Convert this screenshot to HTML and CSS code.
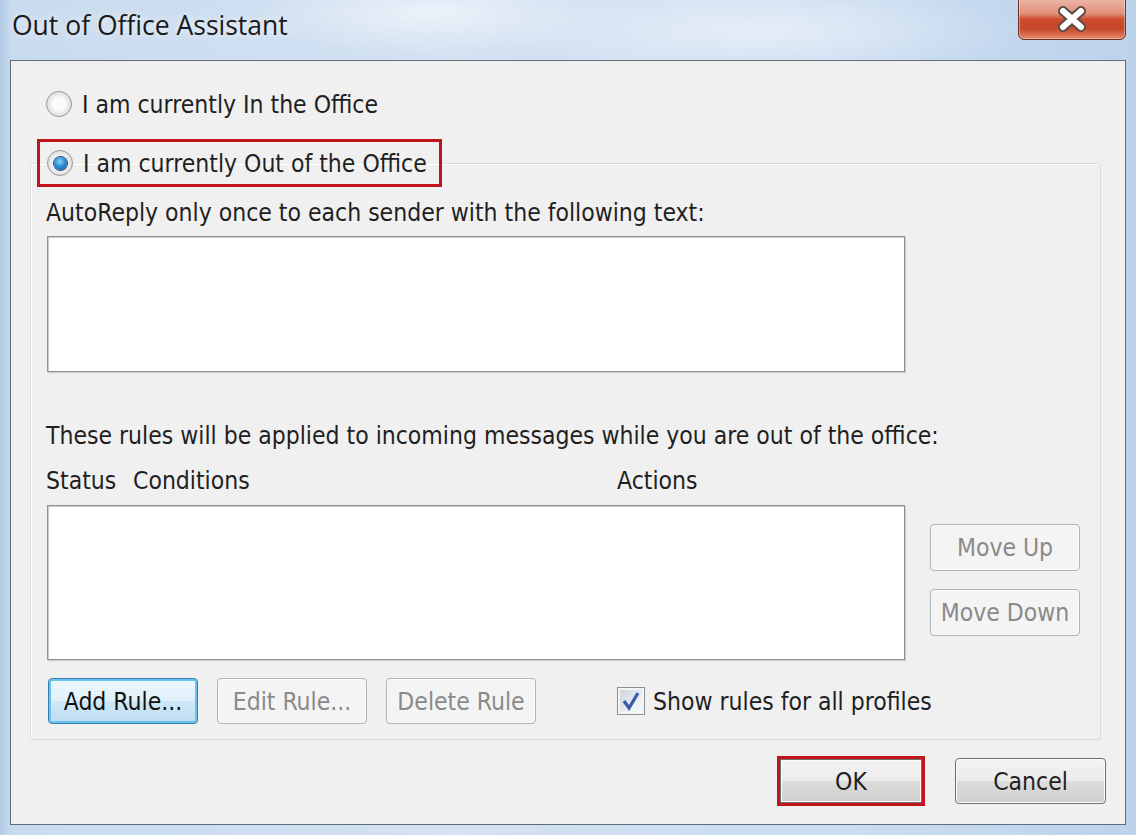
FILE: index.html
```html
<!DOCTYPE html>
<html lang="en">

<head>
    <meta charset="utf-8">
    <title>Out of Office Assistant</title>
    <link rel="stylesheet" href="styles.css">
</head>

<body>

    <div class="window">
        <header class="titlebar">
            <span class="title">Out of Office Assistant</span>
            <button class="close" aria-label="Close">
                <svg width="34" height="26" viewBox="0 0 34 26">
                    <path d="M8 5 L26 21 M26 5 L8 21" stroke="#5a4a48" stroke-width="10" stroke-linecap="round" />
                    <path d="M8 5 L26 21 M26 5 L8 21" stroke="#ffffff" stroke-width="6" stroke-linecap="round" />
                </svg>
            </button>
        </header>

        <div class="client">
            <label class="option first">
                <span class="radio"></span>
                I am currently In the Office
            </label>

            <fieldset class="group">
                <legend class="option marked">
                    <span class="radio on"></span>
                    I am currently Out of the Office
                </legend>

                <p class="label reply-label">AutoReply only once to each sender with the following text:</p>
                <div class="box reply"></div>

                <p class="label rules-label">These rules will be applied to incoming messages while you are out of the office:</p>
                <div class="cols">
                    <span class="col-status">Status</span>
                    <span class="col-cond">Conditions</span>
                    <span>Actions</span>
                </div>

                <div class="rules-row">
                    <div class="box rules"></div>
                    <div class="side">
                        <button class="btn" disabled>Move Up</button>
                        <button class="btn" disabled>Move Down</button>
                    </div>
                </div>

                <div class="actions">
                    <button class="btn focus">Add Rule...</button>
                    <button class="btn" disabled>Edit Rule...</button>
                    <button class="btn" disabled>Delete Rule</button>
                    <label class="check">
                        <span class="checkbox">
                            <svg width="22" height="22" viewBox="0 0 22 22">
                                <path d="M4 11 L9 18 L18 3" fill="none" stroke="#3b5aa6" stroke-width="3.2" />
                            </svg>
                        </span>
                        Show rules for all profiles
                    </label>
                </div>
            </fieldset>

            <div class="footer">
                <div class="marked ok-mark">
                    <button class="btn ok">OK</button>
                </div>
                <button class="btn cancel">Cancel</button>
            </div>
        </div>
    </div>

</body>

</html>
```

FILE: styles.css
```css
body {
    margin: 0;
    font-family: "DejaVu Sans", sans-serif;
    font-stretch: condensed;
    font-size: 24.5px;
    color: #1f1f1f;
}

.window {
    width: 1136px;
    height: 835px;
    display: flex;
    flex-direction: column;
    background:
        radial-gradient(ellipse 180px 40px at 430px 14px, rgba(255, 255, 255, 0.55), transparent),
        radial-gradient(ellipse 260px 50px at 760px 30px, rgba(255, 255, 255, 0.5), transparent),
        linear-gradient(90deg, #b3cbe6 0px, #c9dbef 12px, #d4e2f2 40%, #cadcf0 75%, #bdd3ec 100%);
    overflow: hidden;
}

.titlebar {
    height: 60px;
    position: relative;
    flex-shrink: 0;
}

.title {
    display: block;
    padding: 7px 0 0 12px;
    font-family: "Open Sans", sans-serif;
    font-stretch: normal;
    font-size: 26.5px;
    color: #1a1a1a;
    text-shadow: 0 0 8px rgba(255, 255, 255, 0.9);
}

.close {
    position: absolute;
    top: -3px;
    right: 10px;
    width: 108px;
    height: 43px;
    border: 1px solid #6e3326;
    border-radius: 0 0 6px 6px;
    background: linear-gradient(180deg, #ecb6a8 0%, #e39179 38%, #cc4b2d 52%, #c8462a 75%, #e48d6b 100%);
    box-shadow: inset 0 0 0 1px rgba(255, 255, 255, 0.35);
    display: flex;
    align-items: center;
    justify-content: center;
    padding: 0;
}

.client {
    flex: 1;
    margin: 0 10px 10px 10px;
    border: 1px solid #5f6c7a;
    background-color: #f0f0f0;
    padding: 28px 0 0 0;
    display: flex;
    flex-direction: column;
}

.option {
    display: flex;
    align-items: center;
    gap: 10px;
    height: 30px;
}

.first {
    padding-left: 35px;
}

.radio {
    width: 26px;
    height: 26px;
    border-radius: 50%;
    border: 1px solid #979797;
    box-sizing: border-box;
    background: radial-gradient(circle, #fbfbfb 0 35%, #e2e2e2 65%, #f6f6f6 100%);
    display: flex;
    align-items: center;
    justify-content: center;
    flex-shrink: 0;
}

.radio.on::after {
    content: "";
    width: 13px;
    height: 13px;
    border-radius: 50%;
    background: radial-gradient(circle at 45% 35%, #8fd3f7 0, #2a8fd6 45%, #0f4f95 100%);
    box-shadow: 0 0 0 1px #1d4f86;
}

.group {
    margin: 20px 24px 0 19px;
    padding: 0 0 15px 0;
    border: 1px solid #d6dbe0;
    border-radius: 3px;
    box-shadow: inset 1px 1px 0 #ffffff;
}

.marked {
    border: 3px solid #c2141b;
}

.group legend {
    margin-left: 6px;
    padding: 0 12px 0 7px;
    height: 42px;
}

.label {
    margin: 0;
    padding-left: 15px;
    line-height: 28px;
}

.reply-label {
    margin-top: 12px;
}

.box {
    background-color: #ffffff;
    border: 1px solid #8f9092;
    box-shadow: inset 1px 1px 1px #c9c9c9, 1px 1px 1px #d0d0d0;
    box-sizing: border-box;
    width: 858px;
}

.reply {
    height: 136px;
    margin: 9px 0 0 16px;
}

.rules-label {
    margin-top: 50px;
}

.cols {
    display: flex;
    padding-left: 15px;
    margin-top: 17px;
    line-height: 28px;
}

.col-status {
    width: 87px;
}

.col-cond {
    width: 484px;
}

.rules-row {
    display: flex;
    gap: 25px;
    margin: 10px 0 0 16px;
}

.rules {
    height: 155px;
}

.side {
    display: flex;
    flex-direction: column;
    gap: 18px;
    padding-top: 19px;
}

.btn {
    width: 150px;
    height: 47px;
    font-family: "DejaVu Sans", sans-serif;
    font-stretch: condensed;
    font-size: 24.5px;
    color: #1f1f1f;
    border: 1px solid #707070;
    border-radius: 4px;
    background: linear-gradient(180deg, #f3f3f3 0%, #ebebeb 49%, #dddddd 51%, #cfcfcf 100%);
    box-shadow: inset 0 0 0 1px #fbfbfb;
    padding: 0;
    white-space: nowrap;
}

.btn:disabled {
    color: #8a8a8a;
    border-color: #b0b3b5;
    background: #f4f4f4;
    box-shadow: inset 0 0 0 1px #fbfbfb;
}

.actions {
    display: flex;
    align-items: center;
    margin: 18px 0 0 17px;
}

.actions .btn {
    height: 46px;
}

.actions .btn + .btn {
    margin-left: 19px;
}

.btn.focus {
    border-color: #3a7bb0;
    background: linear-gradient(180deg, #edf7fd 0%, #e1f1fb 49%, #cfe8f8 51%, #bcdcef 100%);
    box-shadow: inset 0 0 0 2px #68c3ef;
    color: #111;
}

.check {
    display: flex;
    align-items: center;
    gap: 8px;
    margin-left: 81px;
}

.checkbox {
    width: 28px;
    height: 28px;
    box-sizing: border-box;
    border: 1px solid #8e8f8f;
    background: linear-gradient(135deg, #c9d2dc 0%, #eef2f5 70%, #f8f9fa 100%);
    box-shadow: inset 0 0 0 2px #f4f4f4;
    display: flex;
    align-items: center;
    justify-content: center;
}

.footer {
    display: flex;
    justify-content: flex-end;
    align-items: center;
    gap: 30px;
    margin: 16px 19px 0 0;
}

.ok-mark {
    width: 148px;
    height: 50px;
    box-sizing: border-box;
    display: flex;
}

.ok-mark .btn {
    width: 100%;
    height: 100%;
    border-radius: 0;
}

.cancel {
    width: 151px;
    height: 46px;
}
```
